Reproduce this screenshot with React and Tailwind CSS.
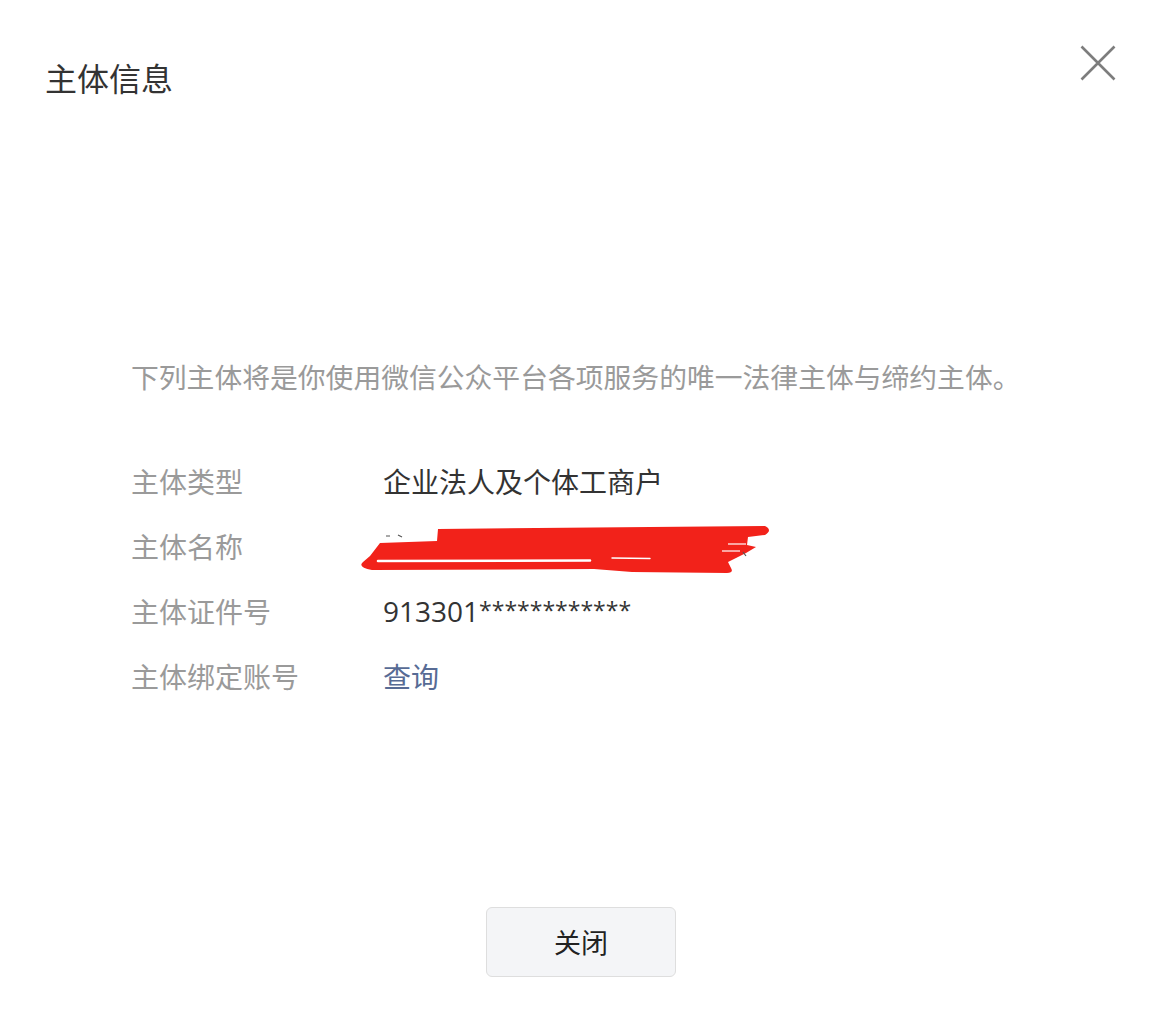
import React from "react";

const font = { fontFamily: '"Noto Sans CJK SC", "Noto Sans", sans-serif' };

function Row({ label, children }) {
  return (
    <div className="flex items-center h-[65px]">
      <div className="w-[252px] text-[28px] text-[#9a9a9a]">{label}</div>
      <div className="relative text-[28px] text-[#333333]">{children}</div>
    </div>
  );
}

function Scribble() {
  return (
    <svg
      className="absolute left-[-33px] top-[-9px]"
      width="430"
      height="70"
      viewBox="0 0 430 70"
    >
      <path
        fill="#f2221a"
        d="M30 27 L87 25 L88 13 L415 10 Q423 14 415 19 L398 21 L397 29 L406 31 L396 37 L388 41 L378 46 L381 52 Q384 57 377 57 L282 56 L244 53 L22 54 Q7 51 13 46 L20 40 Z"
      />
      <path d="M28 45 L240 44.5" stroke="#ffffff" strokeWidth="2.6" strokeLinecap="round" />
      <path d="M262 42 L300 42.5" stroke="#ffffff" strokeWidth="1.4" strokeLinecap="round" />
      <path d="M378 28 L396 28" stroke="#ffffff" strokeWidth="1.2" />
      <path d="M372 35 L390 35" stroke="#ffffff" strokeWidth="1.2" />
      <path d="M36 20 L40 20 M48 19 L52 21 M393 36 L396 40" stroke="#555" strokeWidth="1.2" />
    </svg>
  );
}

export default function App() {
  return (
    <div className="w-[1173px] h-[1017px] bg-white flex flex-col" style={font}>
      <div className="flex items-start justify-between pl-[45px] pr-[57px] pt-[56px]">
        <div className="text-[32px] leading-[42px] text-[#333333]">主体信息</div>
        <svg width="36" height="36" viewBox="0 0 36 36" className="mt-[-11px]">
          <path d="M1.5 1.5 L34.5 34.5 M34.5 1.5 L1.5 34.5" stroke="#7d7d7d" strokeWidth="2.6" />
        </svg>
      </div>
      <div className="pl-[131px] mt-[258px] text-[27.8px] leading-[40px] text-[#9a9a9a]">
        下列主体将是你使用微信公众平台各项服务的唯一法律主体与缔约主体。
      </div>
      <div className="pl-[131px] mt-[52px] flex flex-col">
        <Row label="主体类型">企业法人及个体工商户</Row>
        <Row label="主体名称">
          <span className="opacity-0">某某某某某某某某某某某某</span>
          <Scribble />
        </Row>
        <Row label="主体证件号">
          <span style={{ fontFamily: '"Open Sans", "Noto Sans", sans-serif' }}>
            913301
            <span className="text-[23px] align-[3px]">************</span>
          </span>
        </Row>
        <Row label="主体绑定账号">
          <span className="text-[#576b95]">查询</span>
        </Row>
      </div>
      <div className="pl-[486px] mt-[199px]">
        <button className="w-[190px] h-[70px] rounded-[6px] border border-[#dedede] bg-[#f4f5f7] text-[27px] text-[#222222]">
          关闭
        </button>
      </div>
    </div>
  );
}
